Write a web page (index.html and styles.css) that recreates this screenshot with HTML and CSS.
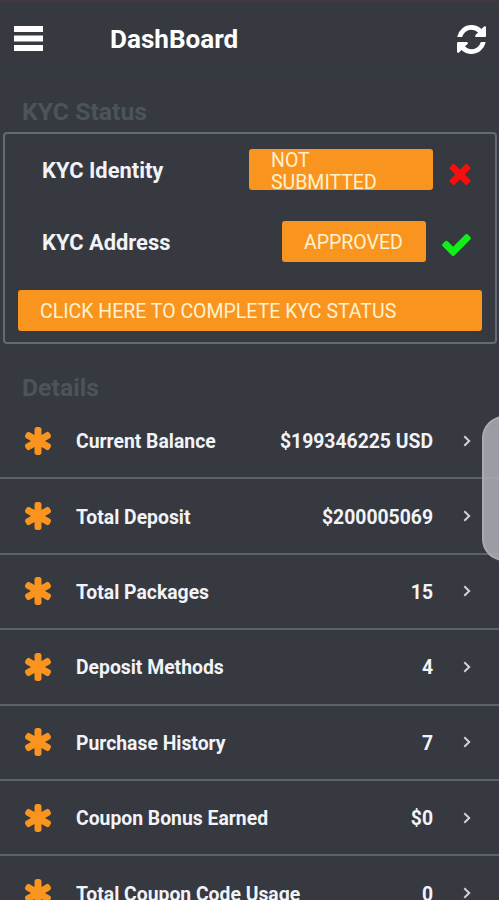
FILE: index.html
```html
<!doctype html>
<html lang="en">
<head>
    <meta charset="UTF-8">
    <meta name="viewport" content="width=device-width, initial-scale=1.0">
    <title>DashBoard</title>

    <link rel="stylesheet" href="styles.css">
</head>
<body>
    <!-- Shared icons -->
    <svg class="sprite" aria-hidden="true">
        <symbol id="asterisk" viewBox="180 128 1432 1536">
            <path d="M1546 1050q46 26 59.5 77.5t-12.5 97.5l-64 110q-26 46-77.5 59.5t-97.5-12.5l-266-153v307q0 52-38 90t-90 38h-128q-52 0-90-38t-38-90v-307l-266 153q-46 26-97.5 12.5t-77.5-59.5l-64-110q-26-46-12.5-97.5t59.5-77.5l266-154-266-154q-46-26-59.5-77.5t12.5-97.5l64-110q26-46 77.5-59.5t97.5 12.5l266 153v-307q0-52 38-90t90-38h128q52 0 90 38t38 90v307l266-153q46-26 97.5-12.5t77.5 59.5l64 110q26 46 12.5 97.5t-59.5 77.5l-266 154z"/>
        </symbol>
        <symbol id="chevron" viewBox="0 0 8 12">
            <path d="M1.3 1.3 6.2 6 1.3 10.7" fill="none" stroke="currentColor" stroke-width="2"/>
        </symbol>
    </svg>

    <header>
        <button class="icon-button" aria-label="Menu">
            <svg class="menu-icon" viewBox="0 0 29 26"><path d="M0 0h29v6H0zM0 9.6h29v6H0zM0 19h29v6H0z"/></svg>
        </button>
        <h1>DashBoard</h1>
        <button class="icon-button" aria-label="Refresh">
            <svg class="refresh-icon" viewBox="0 0 1536 1536"><path d="M1511 928q0 5-1 7-64 268-268 434.5T764 1536q-146 0-282.5-55T238 1324l-129 129q-19 19-45 19t-45-19-19-45V960q0-26 19-45t45-19h448q26 0 45 19t19 45-19 45l-137 137q71 66 161 102t187 36q134 0 250-65t186-179q11-17 53-117 8-23 30-23h192q13 0 22.5 9.5t9.5 22.5zm25-800v448q0 26-19 45t-45 19h-448q-26 0-45-19t-19-45 19-45l138-138Q969 256 768 256q-134 0-250 65T332 500q-11 17-53 117-8 23-30 23H50q-13 0-22.5-9.5T18 608v-7q65-268 270-434.5T768 0q146 0 284 55.5T1297 212l130-129q19-19 45-19t45 19 19 45z"/></svg>
        </button>
    </header>

    <main>
        <h2>KYC Status</h2>
        <section class="kyc">
            <div class="kyc-row">
                <span class="kyc-label">KYC Identity</span>
                <button class="btn btn-identity">NOT SUBMITTED</button>
                <svg class="times-icon" viewBox="302 366 1188 1188"><path d="M1490 1322q0 40-28 68l-136 136q-28 28-68 28t-68-28l-294-294-294 294q-28 28-68 28t-68-28l-136-136q-28-28-28-68t28-68l294-294-294-294q-28-28-28-68t28-68l136-136q28-28 68-28t68 28l294 294 294-294q28-28 68-28t68 28l136 136q28 28 28 68t-28 68l-294 294 294 294q28 28 28 68z"/></svg>
            </div>
            <div class="kyc-row">
                <span class="kyc-label">KYC Address</span>
                <button class="btn btn-address">APPROVED</button>
                <svg class="check-icon" viewBox="121 334 1550 1188"><path d="M1671 566q0 40-28 68l-724 724-136 136q-28 28-68 28t-68-28l-136-136-362-362q-28-28-28-68t28-68l136-136q28-28 68-28t68 28l294 295 656-657q28-28 68-28t68 28l136 136q28 28 28 68z"/></svg>
            </div>
            <button class="btn btn-complete">CLICK HERE TO COMPLETE KYC STATUS</button>
        </section>

        <h2 class="details-heading">Details</h2>
        <ul class="details">
            <li>
                <svg class="asterisk"><use href="#asterisk"/></svg>
                <span class="name">Current Balance</span>
                <span class="value">$199346225 USD</span>
                <svg class="chevron"><use href="#chevron"/></svg>
            </li>
            <li>
                <svg class="asterisk"><use href="#asterisk"/></svg>
                <span class="name">Total Deposit</span>
                <span class="value">$200005069</span>
                <svg class="chevron"><use href="#chevron"/></svg>
            </li>
            <li>
                <svg class="asterisk"><use href="#asterisk"/></svg>
                <span class="name">Total Packages</span>
                <span class="value">15</span>
                <svg class="chevron"><use href="#chevron"/></svg>
            </li>
            <li>
                <svg class="asterisk"><use href="#asterisk"/></svg>
                <span class="name">Deposit Methods</span>
                <span class="value">4</span>
                <svg class="chevron"><use href="#chevron"/></svg>
            </li>
            <li>
                <svg class="asterisk"><use href="#asterisk"/></svg>
                <span class="name">Purchase History</span>
                <span class="value">7</span>
                <svg class="chevron"><use href="#chevron"/></svg>
            </li>
            <li>
                <svg class="asterisk"><use href="#asterisk"/></svg>
                <span class="name">Coupon Bonus Earned</span>
                <span class="value">$0</span>
                <svg class="chevron"><use href="#chevron"/></svg>
            </li>
            <li>
                <svg class="asterisk"><use href="#asterisk"/></svg>
                <span class="name">Total Coupon Code Usage</span>
                <span class="value">0</span>
                <svg class="chevron"><use href="#chevron"/></svg>
            </li>
        </ul>
    </main>

    <div class="edge-handle"></div>
</body>
</html>
```
FILE: styles.css
```css
* {
    box-sizing: border-box;
}

body {
    position: relative;
    height: 900px;
    margin: 0;
    overflow: hidden;
    background-color: #36393f;
    color: #f1f3f8;
    font-family: Roboto, sans-serif;
}

.sprite {
    display: none;
}

svg {
    display: block;
    flex-shrink: 0;
    fill: currentColor;
}

header {
    display: flex;
    align-items: center;
    height: 75px;
    padding: 3px 13px 0 14px;
    border-top: 2px solid #453641;
    border-bottom: 2px solid #343844;
    color: #fff;
}

h1 {
    flex-grow: 1;
    margin: 0 0 0 67px;
    font-size: 26.1px;
    line-height: 30px;
}

.icon-button {
    padding: 0;
    border: none;
    background: none;
    color: inherit;
}

.menu-icon {
    width: 29px;
    height: 26px;
}

.refresh-icon {
    width: 29px;
    height: 29px;
}

h2 {
    margin: 22px 0 5px 22px;
    color: #4b545b;
    font-size: 24.8px;
    line-height: 30px;
}

.kyc {
    height: 212px;
    margin: 0 2px 0 3px;
    padding: 15px 13px 0 13px;
    border: 2px solid #656970;
    border-radius: 4px;
}

.kyc-row {
    display: flex;
    align-items: center;
    height: 41px;
    margin-bottom: 31px;
    padding-left: 24px;
}

.kyc-label {
    flex-grow: 1;
    padding-top: 2px;
    font-size: 21.9px;
    font-weight: bold;
}

.btn {
    display: flex;
    align-items: center;
    height: 41px;
    padding: 2px 22px 0;
    overflow: hidden;
    border: none;
    border-radius: 3px;
    background-color: #f9951f;
    color: #fff1d0;
    font-family: inherit;
    font-size: 19.5px;
    line-height: 22px;
    text-align: left;
}

.btn-identity {
    width: 184px;
    padding-top: 5px;
    padding-right: 50px;
}

.btn-address {
    width: 144px;
}

.btn-complete {
    width: 100%;
    margin-top: -3px;
}

.times-icon {
    width: 22px;
    height: 21px;
    margin: 9px 11px 0 16px;
    color: #fb0d0d;
}

.check-icon {
    width: 29px;
    height: 22px;
    margin: 7px 11px 0 16px;
    color: #10ef18;
}

.details-heading {
    margin: 29px 0 0 22px;
}

.details {
    margin: 0;
    padding: 1px 0 0;
    list-style: none;
}

.details li {
    display: flex;
    align-items: center;
    height: 75.4px;
    padding: 0 28px 0 24px;
    border-bottom: 2px solid #5d6168;
    font-size: 19.35px;
    font-weight: bold;
}

.asterisk {
    width: 28px;
    height: 28px;
    margin-right: 24px;
    color: #f9951f;
}

.name,
.value {
    padding-top: 2px;
}

.name {
    flex-grow: 1;
}

.chevron {
    width: 8px;
    height: 12px;
    margin-left: 30px;
    color: #d0d3d9;
}

/* Pull-out handle of the phone's edge panel */
.edge-handle {
    position: absolute;
    top: 416px;
    right: -5px;
    width: 22px;
    height: 145px;
    border: 2px solid #a9abb0;
    border-radius: 22px 0 0 22px;
    background-color: rgba(172, 175, 181, 0.85);
}
```
